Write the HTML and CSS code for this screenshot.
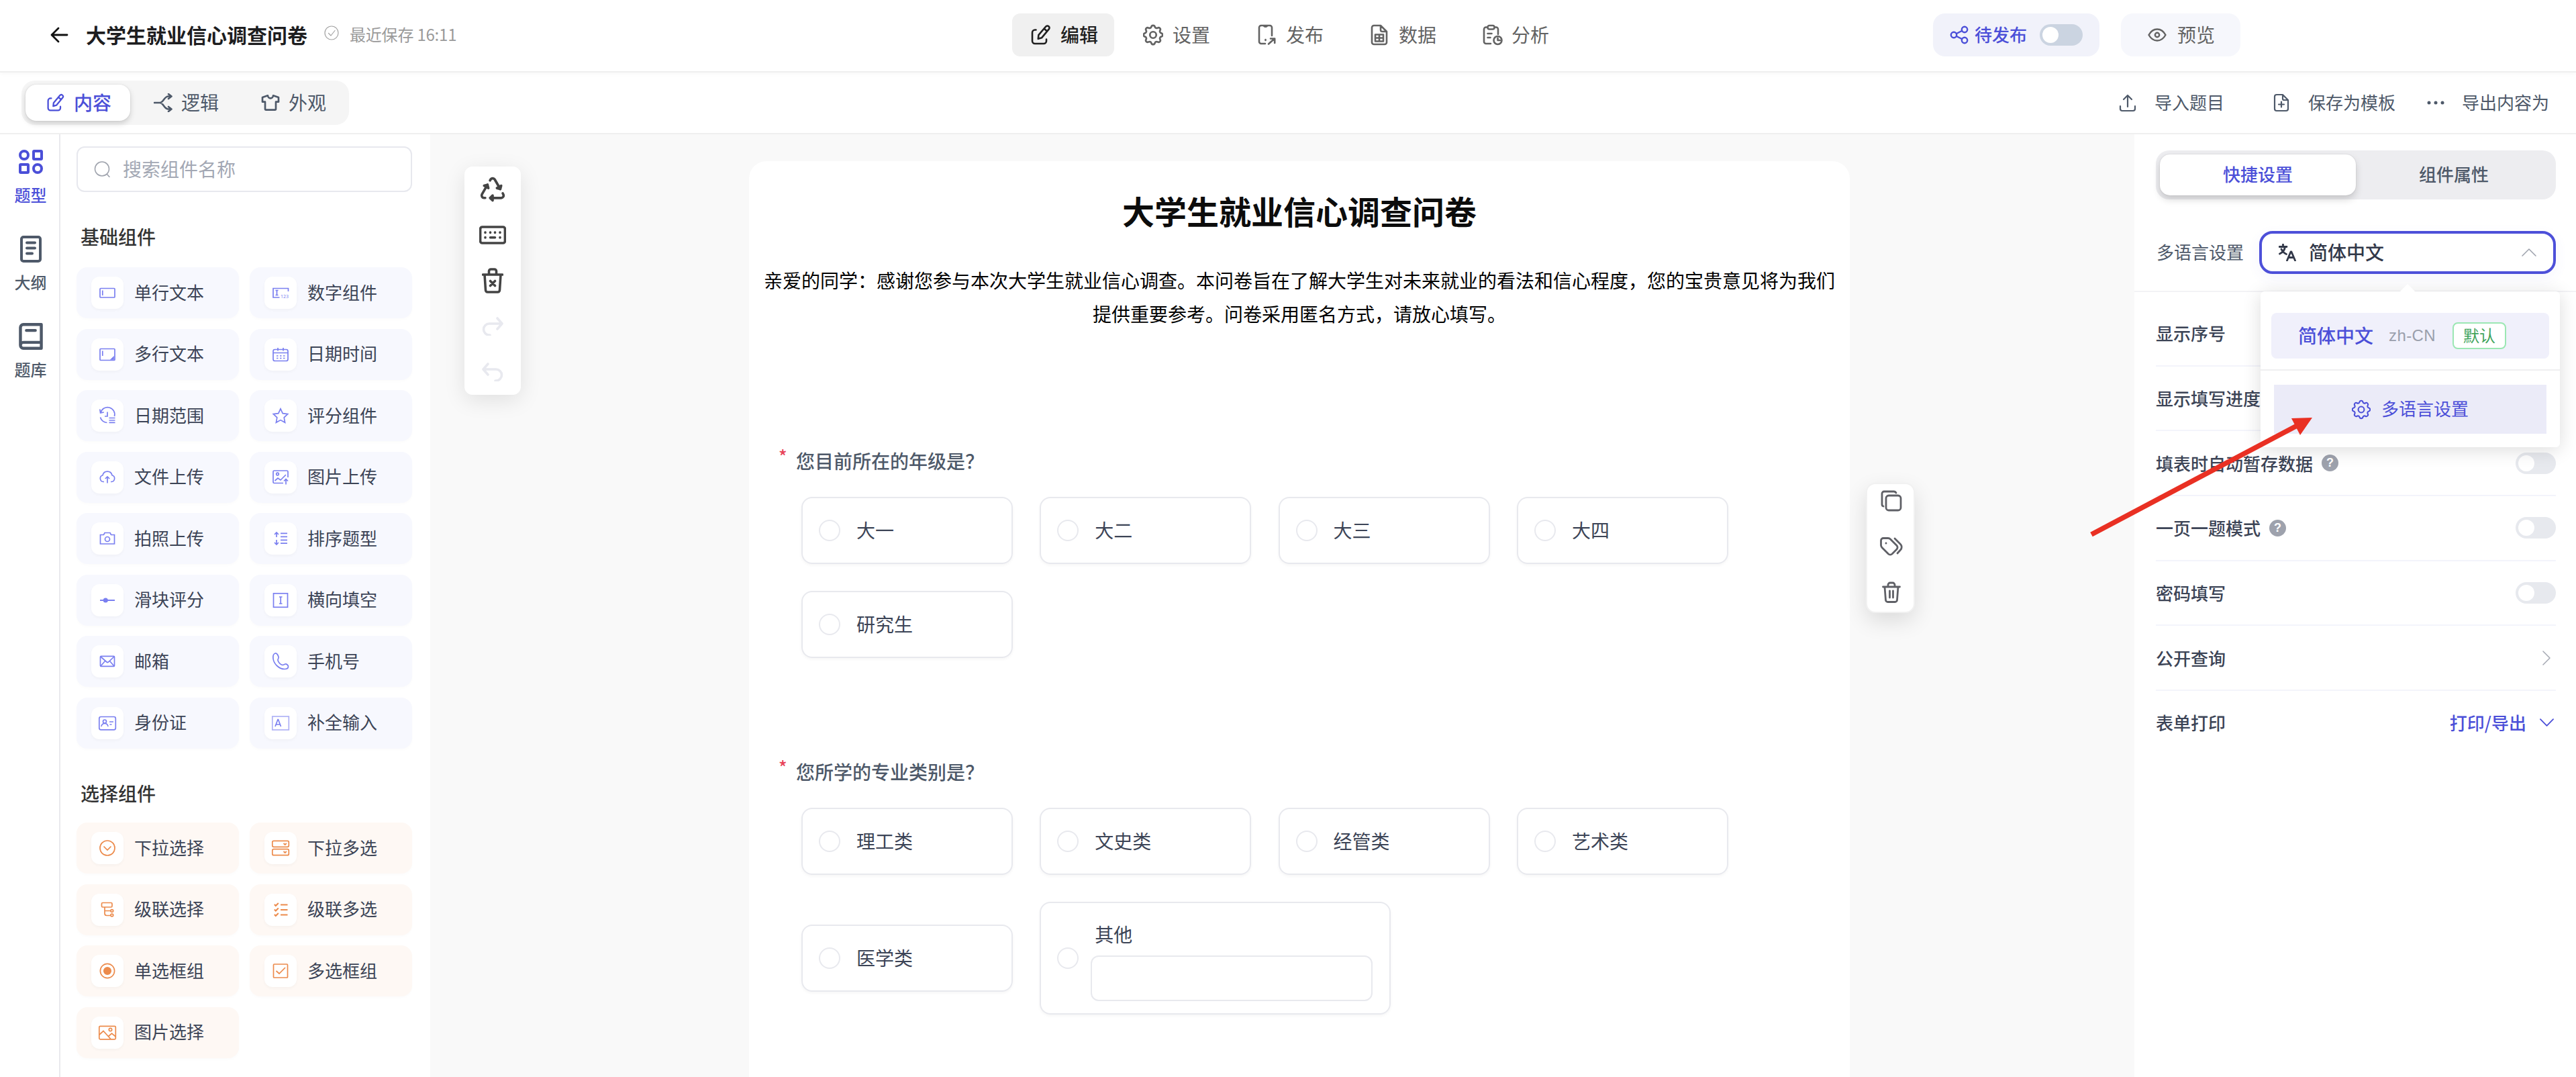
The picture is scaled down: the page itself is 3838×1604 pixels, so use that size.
FILE: index.html
```html
<!DOCTYPE html>
<html lang="zh-CN">
<head>
<meta charset="utf-8">
<title>大学生就业信心调查问卷</title>
<link rel="stylesheet" href="styles.css">
</head>
<body>
<svg class="sprite" aria-hidden="true">
  <symbol id="i-edit" viewBox="0 0 32 32"><path d="M8.500 8.500H7a4 4 0 0 0-4 4V25a4 4 0 0 0 4 4h13a4 4 0 0 0 4-4v-2.500"/><path d="M23.200 3.500a3 3 0 0 1 4.600 3.900L17.200 20.200l-5.400 1.600.6-5.600zM21 7l4 3.500"/></symbol>
  <symbol id="i-gear" viewBox="2.500 2.500 19 19"><path d="M10.325 4.317c.426-1.756 2.924-1.756 3.350 0a1.724 1.724 0 0 0 2.573 1.066c1.543-.94 3.310.826 2.370 2.370a1.724 1.724 0 0 0 1.065 2.572c1.756.426 1.756 2.924 0 3.350a1.724 1.724 0 0 0-1.066 2.573c.94 1.543-.826 3.310-2.370 2.370a1.724 1.724 0 0 0-2.572 1.065c-.426 1.756-2.924 1.756-3.350 0a1.724 1.724 0 0 0-2.573-1.066c-1.543.94-3.310-.826-2.370-2.370a1.724 1.724 0 0 0-1.065-2.572c-1.756-.426-1.756-2.924 0-3.350a1.724 1.724 0 0 0 1.066-2.573c-.94-1.543.826-3.310 2.370-2.370 1 .608 2.296.07 2.572-1.065"/><circle cx="12" cy="12" r="3"/></symbol>
  <symbol id="i-publish" viewBox="0 0 32 32"><path d="M14 29H8a3 3 0 0 1-3-3V5a3 3 0 0 1 3-3h13a3 3 0 0 1 3 3v12M12 2.500q2.500 2.500 5 0M19 29.500l9-8M22 21.500h6.200v6.500"/><path d="M14.500 23v1"/></symbol>
  <symbol id="i-data" viewBox="0 0 32 32"><path d="M18 2H8a3 3 0 0 0-3 3v22a3 3 0 0 0 3 3h16a3 3 0 0 0 3-3V11zM18 2v6.500a2.500 2.500 0 0 0 2.500 2.500H27M10 15.500h12v10H10zM10 20.500h12M16 15.500v10"/></symbol>
  <symbol id="i-analysis" viewBox="0 0 32 32"><path d="M9 4.500H7a3 3 0 0 0-3 3V26a3 3 0 0 0 3 3h7M20 4.500h2a3 3 0 0 1 3 3V15"/><rect x="9.500" y="2" width="10" height="5.500" rx="2.500"/><path d="M9.500 14h6M9.500 20h4"/><circle cx="24.500" cy="24" r="6"/><path d="M24.500 20.500V24h3.500"/></symbol>
  <symbol id="i-back" viewBox="0 0 26 24"><path d="M25 12H2M12 2L2 12l10 10"/></symbol>
  <symbol id="i-ok" viewBox="0 0 22 22"><circle cx="11" cy="11" r="10"/><path d="M6.500 11.500l3.500 3.500 6-7.500"/></symbol>
  <symbol id="i-branch" viewBox="0 0 28 28"><path d="M1 14h8M26.500 4.500H22C15 4.500 15 14 9 14c6 0 6 9.500 13 9.500h4.500M22 1l4.500 3.500L22 8M22 20l4.500 3.500L22 27"/></symbol>
  <symbol id="i-shirt" viewBox="0 0 24 24"><path d="M15 4l6 2v5h-3v8a1 1 0 0 1-1 1H7a1 1 0 0 1-1-1v-8H3V6l6-2a3 3 0 0 0 6 0"/></symbol>
  <symbol id="i-share" viewBox="0 0 28 28"><circle cx="6" cy="14" r="4.200"/><circle cx="22" cy="6" r="4.200"/><circle cx="22" cy="22" r="4.200"/><path d="M10 12l8-4M10 16l8 4"/></symbol>
  <symbol id="i-eye" viewBox="0 0 28 20"><path d="M1.500 10C4.500 4.500 9 1.500 14 1.500S23.500 4.500 26.500 10c-3 5.500-7.500 8.500-12.500 8.500S4.500 15.500 1.500 10z"/><circle cx="14" cy="10" r="3.200"/></symbol>
  <symbol id="i-upload" viewBox="0 0 26 26"><path d="M13 19V2M7 8l6-6 6 6M2 18v4a3 3 0 0 0 3 3h16a3 3 0 0 0 3-3v-4"/></symbol>
  <symbol id="i-filep" viewBox="0 0 26 28"><path d="M15 2H6a3 3 0 0 0-3 3v18a3 3 0 0 0 3 3h14a3 3 0 0 0 3-3V10zM15 2v6a2 2 0 0 0 2 2h6M13 12.500v8M9 16.500h8"/></symbol>
  <symbol id="i-dots" viewBox="0 0 28 8"><g fill="currentColor" stroke="none"><circle cx="4" cy="4" r="2.500"/><circle cx="14" cy="4" r="2.500"/><circle cx="24" cy="4" r="2.500"/></g></symbol>
  <symbol id="i-types" viewBox="0 0 36 36"><circle cx="8" cy="8" r="6"/><rect x="22" y="2" width="12" height="12" rx="1"/><rect x="2" y="22" width="12" height="12" rx="1"/><circle cx="28" cy="28" r="6"/></symbol>
  <symbol id="i-outline" viewBox="0 0 32 40"><rect x="2" y="2" width="28" height="36" rx="3"/><path d="M10 10.500h12M10 18.500h12M10 26.500h8"/></symbol>
  <symbol id="i-bank" viewBox="0 0 32 36"><path d="M30 2H6a4 4 0 0 0-4 4v24a4 4 0 0 0 4 4h24zM2 30a4 4 0 0 1 4-4h24M10 10h12"/></symbol>
  <symbol id="i-search" viewBox="0 0 24 24"><circle cx="12" cy="11.500" r="10.500"/><path d="M19.500 19.500l3.500 4"/></symbol>
  <symbol id="i-recycle" viewBox="0 0 24 24"><path d="M10 19h9a2 2 0 0 0 1.750-2.750l-.55-1M7.804 8.268l-4.500 7.794a2 2 0 0 0 1.506 2.890l1.141.024M18.196 11.732l-4.500-7.794a2 2 0 0 0-3.256-.14l-.591.976"/><path fill="currentColor" d="M12 17l-2 2 2 2zM8.536 11l-.732-2.732-2.732.732zM15.464 11l2.732.732.732-2.732z"/></symbol>
  <symbol id="i-keys" viewBox="0 0 40 28"><rect x="1.600" y="2" width="36.800" height="24" rx="3"/><path d="M9 10v.5M16.500 10v.5M23.500 10v.5M31 10v.5M9 17.500v.5M31 17.500v.5M16.500 17.700h7"/></symbol>
  <symbol id="i-clear" viewBox="0 0 32 38"><path d="M1.500 10h29M4 10l1.500 23a3 3 0 0 0 3 3h15a3 3 0 0 0 3-3L28 10M10.500 9.500V5a3 3 0 0 1 3-3h5a3 3 0 0 1 3 3v4.500M12.500 19.500l7 7M19.500 19.500l-7 7"/></symbol>
  <symbol id="i-redo" viewBox="0 0 32 28"><path d="M23 2l7 8-7 8M29 10H11a8.500 8.500 0 0 0 0 17h1"/></symbol>
  <symbol id="i-undo" viewBox="0 0 32 28"><path d="M9 2l-7 8 7 8M3 10h18a8.500 8.500 0 0 1 0 17h-1"/></symbol>
  <symbol id="i-copy" viewBox="0 0 32 32"><rect x="8" y="8" width="22" height="22" rx="4"/><path d="M4 24a3 3 0 0 1-2-3V5a3 3 0 0 1 3-3h15a4 4 0 0 1 3 2"/></symbol>
  <symbol id="i-tags" viewBox="0 0 34 28"><path d="M1.500 5v7a5 5 0 0 0 1.500 3.500l9.500 9.500a4 4 0 0 0 5.500 0l7-7a4 4 0 0 0 0-5.500L15.500 3A5 5 0 0 0 12 1.500H5A3.500 3.500 0 0 0 1.500 5zM22 2l8.500 8.500a6 6 0 0 1 0 8.500L26 24M9 9v.2"/></symbol>
  <symbol id="i-trash" viewBox="0 0 28 32"><path d="M1.500 8h25M4 8l1.500 19.500a3 3 0 0 0 3 3h11a3 3 0 0 0 3-3L24 8M9 7.500V5a3 3 0 0 1 3-3h4a3 3 0 0 1 3 3v2.500M11.500 14v10M16.500 14v10"/></symbol>
  <symbol id="i-lang" viewBox="0 0 26 26"><path d="M1 4.500h11M6.500 1v3.500M9.500 4.500C9 9 6 13 1.500 15M4 8c1.500 3.500 4 6 7.500 7.500M12.500 25L18 12h1l5.500 13M14.500 20.500h8"/></symbol>
  <symbol id="i-up" viewBox="0 0 22 12"><path d="M1 11L11 1l10 10"/></symbol>
  <symbol id="i-down" viewBox="0 0 22 12"><path d="M1 1l10 10L21 1"/></symbol>
  <symbol id="i-right" viewBox="0 0 12 22"><path d="M1 1l10 10L1 21"/></symbol>

  <symbol id="c-single" viewBox="0 0 48 48"><rect x="13" y="17.500" width="22" height="13.500" rx="1"/><path d="M16.800 20.500v7.500"/></symbol>
  <symbol id="c-number" viewBox="0 0 48 48"><path d="M22.500 31H13V17.500h22.500V22M16.500 20.500h4M18.500 20.500v7M16.500 27.500h4"/><text x="24" y="31.500">123</text></symbol>
  <symbol id="c-multi" viewBox="0 0 48 48"><rect x="13" y="15.500" width="22" height="17" rx="1"/><path d="M16.800 18.500v7.500"/><path fill="currentColor" d="M33 28v3h-3z"/></symbol>
  <symbol id="c-cal" viewBox="0 0 48 48"><rect x="13" y="16.500" width="22" height="17" rx="2.500"/><path d="M13 21.500h22M20 14v4.500M28 14v4.500M18 26h2.500M23 26h2.500M28 26h2.500M18 29.500h2.500M23 29.500h2.500M28 29.500h2.500"/></symbol>
  <symbol id="c-range" viewBox="0 0 48 48"><path d="M14 19.500A10.500 10.500 0 0 1 34.500 25M13.500 26.500A10.500 10.500 0 0 0 23.500 34.500M12.800 14.500l.8 5.500 5.200-1M24 18.500V25h-4M26.500 27.500h9M26.500 31h9M26.500 34.300h9"/></symbol>
  <symbol id="c-star" viewBox="0 0 48 48"><path d="M24 13.800l3.200 6.900 7.500.9-5.500 5.200 1.400 7.500-6.600-3.700-6.600 3.700 1.400-7.500-5.500-5.200 7.500-.9z"/></symbol>
  <symbol id="c-cloud" viewBox="0 0 48 48"><path d="M19 30.500h-1a5 5 0 0 1-1-9.800 7.200 7.200 0 0 1 14 0 5 5 0 0 1-1 9.800h-1M24 32.500v-9.500M20.800 26l3.200-3 3.200 3"/></symbol>
  <symbol id="c-imgup" viewBox="0 0 48 48"><path d="M28 32.500H14.500a1.500 1.500 0 0 1-1.500-1.500V15.500a1.500 1.500 0 0 1 1.500-1.500h19a1.500 1.500 0 0 1 1.500 1.500V24M15.500 29l4.500-4 4 3 8-8M32 34.500V27M29 29.500l3-3 3 3"/><circle cx="19.500" cy="19" r="1.800"/></symbol>
  <symbol id="c-cam" viewBox="0 0 48 48"><path d="M13.500 18.500h5l1.500-3h8l1.500 3h5V32h-21z"/><circle cx="24" cy="25" r="3.500"/></symbol>
  <symbol id="c-sort" viewBox="0 0 48 48"><path d="M18 15v7M15 18l3-3 3 3M18 26v7M15 30l3 3 3-3M24 16.300h10M24 21.300h10M24 26.300h10M24 31.200h10"/></symbol>
  <symbol id="c-slider" viewBox="0 0 48 48"><path stroke-width="2.200" d="M13 24h22"/><circle cx="21.300" cy="24" r="2.700" fill="currentColor"/></symbol>
  <symbol id="c-blank" viewBox="0 0 48 48"><rect x="13.500" y="13.800" width="21" height="20.500"/><path d="M22 19h4.500M24.200 19v10M22 29h4.500"/></symbol>
  <symbol id="c-mail" viewBox="0 0 48 48"><rect x="13.500" y="16.300" width="21" height="15" rx="1"/><path d="M14 17l9 8q1.200 1 2.400 0l8.600-8M14 31l6.500-7.500M34 31l-6.500-7.500"/></symbol>
  <symbol id="c-phone" viewBox="0 0 48 48"><path d="M16 12c-3 1-3.600 3.500-3 8C14 28 22 35.500 30 35.500c4 0 5.500-2 5.500-4 0-1.500-2.500-4-4.500-3.500s-3 2-5.500 1-5.500-4.500-5.500-7 1.500-2 1-4.500-2.500-6-5-5.500z"/></symbol>
  <symbol id="c-id" viewBox="0 0 48 48"><rect x="11.800" y="14.500" width="24.500" height="19.300" rx="2.500"/><circle cx="20" cy="21.500" r="2.500"/><path d="M15 29c.5-3.500 2.500-4.500 5-4.500s4.500 1 5 4.500M27 22h6M27.500 26h3"/></symbol>
  <symbol id="c-auto" viewBox="0 0 48 48"><rect x="11.800" y="14" width="24.500" height="20" opacity=".6"/><path d="M16 29l4-10.500h.5l4 10.500M17.200 26h6"/></symbol>
  <symbol id="c-sel" viewBox="0 0 48 48"><circle cx="24" cy="24" r="11"/><path d="M18.500 21.500l5.500 5.500 5.500-5.500"/></symbol>
  <symbol id="c-msel" viewBox="0 0 48 48"><rect x="11.800" y="13.300" width="24.500" height="9" rx="2"/><rect x="11.800" y="25.700" width="24.500" height="9" rx="2"/><path d="M28.500 17l2.200 2 2.200-2M28.500 29l2.200 2 2.200-2"/></symbol>
  <symbol id="c-tree" viewBox="0 0 48 48"><rect x="15.500" y="13.500" width="15.500" height="6.500" rx="1.500"/><path d="M20 20v9.500a3 3 0 0 0 3 3h5.500M20 25.500h8.500"/><circle cx="30.800" cy="25.500" r="1.900"/><circle cx="30.800" cy="32" r="1.900"/></symbol>
  <symbol id="c-list" viewBox="0 0 48 48"><path stroke-width="2" d="M24 16.500h10.500M24 24h10.500M24 31.500h10.500M14.800 16l2 2 4-4M14.800 23.500l2 2 4-4M14.800 31l2 2 4-4"/></symbol>
  <symbol id="c-radio" viewBox="0 0 48 48"><circle cx="24" cy="24" r="10.600"/><circle cx="24" cy="24" r="5.200" fill="currentColor"/></symbol>
  <symbol id="c-check" viewBox="0 0 48 48"><rect x="13.500" y="14" width="21" height="20" rx="1"/><path d="M17.500 24l4.500 4 9-9"/></symbol>
  <symbol id="c-img" viewBox="0 0 48 48"><rect x="11.800" y="14.300" width="24.500" height="19.500" rx="1.500"/><path d="M12 27l6-5.500 11 12M25.500 29.500l5-4.500 6 5"/><circle cx="28.500" cy="19.500" r="2.200"/></symbol>
</svg>

<header class="topbar">
  <div class="doc">
    <svg class="ic back"><use href="#i-back"/></svg>
    <h1 class="doc-title t">大学生就业信心调查问卷</h1>
    <svg class="ic ok"><use href="#i-ok"/></svg>
    <span class="saved t">最近保存 16:11</span>
  </div>
  <nav class="stages">
    <a class="stage on"><svg class="ic"><use href="#i-edit"/></svg><span class="t">编辑</span></a>
    <a class="stage"><svg class="ic gear"><use href="#i-gear"/></svg><span class="t">设置</span></a>
    <a class="stage"><svg class="ic"><use href="#i-publish"/></svg><span class="t">发布</span></a>
    <a class="stage"><svg class="ic"><use href="#i-data"/></svg><span class="t">数据</span></a>
    <a class="stage"><svg class="ic"><use href="#i-analysis"/></svg><span class="t">分析</span></a>
  </nav>
  <div class="actions">
    <div class="pending"><svg class="ic"><use href="#i-share"/></svg><span class="t">待发布</span><i class="switch dark"></i></div>
    <div class="preview"><svg class="ic"><use href="#i-eye"/></svg><span class="t">预览</span></div>
  </div>
</header>

<div class="subbar">
  <div class="modes">
    <a class="mode on"><svg class="ic"><use href="#i-edit"/></svg><span class="t">内容</span></a>
    <a class="mode"><svg class="ic"><use href="#i-branch"/></svg><span class="t">逻辑</span></a>
    <a class="mode"><svg class="ic shirt"><use href="#i-shirt"/></svg><span class="t">外观</span></a>
  </div>
  <div class="tools">
    <a class="tool"><svg class="ic"><use href="#i-upload"/></svg><span class="t">导入题目</span></a>
    <a class="tool save"><svg class="ic"><use href="#i-filep"/></svg><span class="t">保存为模板</span></a>
    <a class="tool more"><svg class="ic"><use href="#i-dots"/></svg><span class="t">导出内容为</span></a>
  </div>
</div>

<main class="body">
  <nav class="rail">
    <a class="rail-item on"><svg class="ic"><use href="#i-types"/></svg><span>题型</span></a>
    <a class="rail-item"><svg class="ic"><use href="#i-outline"/></svg><span>大纲</span></a>
    <a class="rail-item"><svg class="ic"><use href="#i-bank"/></svg><span>题库</span></a>
  </nav>

  <aside class="panel">
    <div class="search"><svg class="ic"><use href="#i-search"/></svg><span class="t">搜索组件名称</span></div>
    <h2 class="group">基础组件</h2>
    <div class="cards">
      <div class="card"><svg><use href="#c-single"/></svg><span class="t">单行文本</span></div>
      <div class="card"><svg><use href="#c-number"/></svg><span class="t">数字组件</span></div>
      <div class="card"><svg><use href="#c-multi"/></svg><span class="t">多行文本</span></div>
      <div class="card"><svg><use href="#c-cal"/></svg><span class="t">日期时间</span></div>
      <div class="card"><svg><use href="#c-range"/></svg><span class="t">日期范围</span></div>
      <div class="card"><svg><use href="#c-star"/></svg><span class="t">评分组件</span></div>
      <div class="card"><svg><use href="#c-cloud"/></svg><span class="t">文件上传</span></div>
      <div class="card"><svg><use href="#c-imgup"/></svg><span class="t">图片上传</span></div>
      <div class="card"><svg><use href="#c-cam"/></svg><span class="t">拍照上传</span></div>
      <div class="card"><svg><use href="#c-sort"/></svg><span class="t">排序题型</span></div>
      <div class="card"><svg><use href="#c-slider"/></svg><span class="t">滑块评分</span></div>
      <div class="card"><svg><use href="#c-blank"/></svg><span class="t">横向填空</span></div>
      <div class="card"><svg><use href="#c-mail"/></svg><span class="t">邮箱</span></div>
      <div class="card"><svg><use href="#c-phone"/></svg><span class="t">手机号</span></div>
      <div class="card"><svg><use href="#c-id"/></svg><span class="t">身份证</span></div>
      <div class="card"><svg><use href="#c-auto"/></svg><span class="t">补全输入</span></div>
    </div>
    <h2 class="group second">选择组件</h2>
    <div class="cards warm">
      <div class="card"><svg><use href="#c-sel"/></svg><span class="t">下拉选择</span></div>
      <div class="card"><svg><use href="#c-msel"/></svg><span class="t">下拉多选</span></div>
      <div class="card"><svg><use href="#c-tree"/></svg><span class="t">级联选择</span></div>
      <div class="card"><svg><use href="#c-list"/></svg><span class="t">级联多选</span></div>
      <div class="card"><svg><use href="#c-radio"/></svg><span class="t">单选框组</span></div>
      <div class="card"><svg><use href="#c-check"/></svg><span class="t">多选框组</span></div>
      <div class="card"><svg><use href="#c-img"/></svg><span class="t">图片选择</span></div>
    </div>
  </aside>

  <section class="canvas">
    <div class="side-tools">
      <span><svg class="ic" width="44" height="44"><use href="#i-recycle"/></svg></span>
      <span><svg class="ic" width="40" height="28"><use href="#i-keys"/></svg></span>
      <span><svg class="ic" width="32" height="38"><use href="#i-clear"/></svg></span>
      <span class="off"><svg class="ic" width="32" height="28"><use href="#i-redo"/></svg></span>
      <span class="off"><svg class="ic" width="32" height="28"><use href="#i-undo"/></svg></span>
    </div>
    <article class="paper">
      <h2 class="paper-title">大学生就业信心调查问卷</h2>
      <p class="intro">亲爱的同学：感谢您参与本次大学生就业信心调查。本问卷旨在了解大学生对未来就业的看法和信心程度，您的宝贵意见将为我们<br>提供重要参考。问卷采用匿名方式，请放心填写。</p>
      <section class="question">
        <h3 class="q-title"><b>*</b>您目前所在的年级是？</h3>
        <div class="options">
          <label class="option"><i></i><span class="t">大一</span></label>
          <label class="option"><i></i><span class="t">大二</span></label>
          <label class="option"><i></i><span class="t">大三</span></label>
          <label class="option"><i></i><span class="t">大四</span></label>
          <label class="option"><i></i><span class="t">研究生</span></label>
        </div>
      </section>
      <section class="question">
        <h3 class="q-title"><b>*</b>您所学的专业类别是？</h3>
        <div class="options">
          <label class="option"><i></i><span class="t">理工类</span></label>
          <label class="option"><i></i><span class="t">文史类</span></label>
          <label class="option"><i></i><span class="t">经管类</span></label>
          <label class="option"><i></i><span class="t">艺术类</span></label>
          <label class="option"><i></i><span class="t">医学类</span></label>
          <label class="option other"><i></i><span class="other-body"><span>其他</span><span class="other-input"></span></span></label>
        </div>
      </section>
    </article>
    <div class="item-tools">
      <svg class="ic" width="32" height="32"><use href="#i-copy"/></svg>
      <svg class="ic" width="34" height="28"><use href="#i-tags"/></svg>
      <svg class="ic" width="28" height="32"><use href="#i-trash"/></svg>
    </div>
  </section>

  <aside class="props">
    <div class="tabs"><a class="tab on"><span class="t">快捷设置</span></a><a class="tab"><span class="t">组件属性</span></a></div>
    <div class="lang-row">
      <span class="lang-label t">多语言设置</span>
      <div class="select">
        <svg class="ic lang"><use href="#i-lang"/></svg><span class="t">简体中文</span><svg class="ic caret"><use href="#i-up"/></svg>
        <div class="menu">
          <div class="menu-top"><div class="choice"><span class="t">简体中文</span><small>zh-CN</small><em>默认</em></div></div>
          <div class="menu-btn"><svg class="ic"><use href="#i-gear"/></svg><span class="t">多语言设置</span></div>
        </div>
      </div>
    </div>
    <div class="rows">
      <div class="row"><span>显示序号</span></div>
      <div class="row"><span>显示填写进度</span></div>
      <div class="row"><span>填表时自动暂存数据</span><q>?</q><i class="switch"></i></div>
      <div class="row"><span>一页一题模式</span><q>?</q><i class="switch"></i></div>
      <div class="row"><span>密码填写</span><i class="switch"></i></div>
      <div class="row"><span>公开查询</span><svg class="ic go"><use href="#i-right"/></svg></div>
      <div class="row last"><span>表单打印</span><a class="print">打印/导出<svg class="ic dn"><use href="#i-down"/></svg></a></div>
    </div>
  </aside>
</main>
<svg class="pointer" viewBox="0 0 340 190" width="340" height="190"><path d="M6 182L316 18" stroke="#e93023" stroke-width="7.500" fill="none"/><path d="M304 9l31-1-18 26z" fill="#e93023"/></svg>
</body>
</html>
```
FILE: styles.css
```css
* { box-sizing: border-box; }
body {
  margin: 0;
  width: 3838px;
  height: 1604px;
  overflow: hidden;
  position: relative;
  display: flex;
  flex-direction: column;
  background: #fff;
  color: #3c4456;
  font-family: "Noto Sans CJK SC", "Noto Sans", sans-serif;
  font-size: 28px;
  line-height: 40px;
}
h1, h2, h3, p { margin: 0; font-weight: 500; }
i, em { font-style: normal; }
.sprite { display: none; }
.ic {
  flex: none;
  fill: none;
  stroke: currentColor;
  stroke-width: 2.4;
  stroke-linecap: round;
  stroke-linejoin: round;
}
/* optical centring of CJK glyphs in flex rows */
.t { margin-bottom: 3px; white-space: nowrap; }

/* top bar */
.topbar {
  flex: none;
  display: flex;
  align-items: center;
  height: 108px;
  padding: 0 500px 2px 74px;
  border-bottom: 2px solid #efefef;
  box-shadow: 0 2px 6px rgba(0, 0, 0, .03);
}
.doc { display: flex; align-items: center; width: 1434px; }
.back { width: 28px; height: 24px; color: #111; stroke-width: 2.8; margin-right: 26px; }
.doc-title { font-size: 30px; font-weight: 700; color: #1d1d1f; }
.ok { width: 22px; height: 22px; margin: -7px 16px 0 25px; color: #a3a3a3; stroke-width: 1.2; }
.saved { font-size: 24px; color: #9a9a9a; letter-spacing: -.2px; }
.stages { display: flex; gap: 16px; width: 1372px; }
.stage {
  display: flex;
  align-items: center;
  gap: 13px;
  width: 152px;
  height: 64px;
  padding-left: 27px;
  border-radius: 12px;
  color: #636363;
}
.stage .ic { width: 32px; height: 32px; stroke-width: 2.6; }
.stage .gear { width: 30px; height: 32px; margin-right: 1px; stroke-width: 1.700; }
.stage.on { background: #f0f0f0; color: #1f1f1f; font-weight: 500; }
.actions { display: flex; gap: 32px; }
.pending, .preview { display: flex; align-items: center; height: 64px; border-radius: 18px; }
.pending { width: 248px; padding-left: 25px; background: #f1f2fa; color: #4b4fd8; font-size: 26px; font-weight: 500; }
.pending .ic { width: 28px; height: 28px; margin-right: 9px; }
.pending .switch { margin-left: 19px; }
.preview { width: 178px; padding-left: 40px; gap: 16px; background: #f6f7fc; color: #636363; }
.preview .ic { width: 28px; height: 20px; }
.switch {
  flex: none;
  width: 60px;
  height: 32px;
  padding: 4px;
  border-radius: 16px;
  background: #e7e9ee;
}
.switch::before { content: ""; display: block; width: 24px; height: 24px; border-radius: 50%; background: #fff; }
.switch.dark { width: 64px; background: #cbd4e1; }

/* second bar */
.subbar {
  flex: none;
  display: flex;
  align-items: center;
  justify-content: space-between;
  height: 92px;
  padding: 0 40px 0 32px;
  border-bottom: 2px solid #efefef;
  color: #4e5969;
}
.modes {
  display: flex;
  align-items: center;
  width: 488px;
  height: 66px;
  padding: 0 6px;
  gap: 4px;
  border-radius: 20px;
  background: #f5f5f5;
}
.mode {
  display: flex;
  align-items: center;
  gap: 13px;
  width: 156px;
  height: 54px;
  padding-left: 31px;
  border-radius: 16px;
}
.mode .ic { width: 28px; height: 28px; stroke-width: 2.6; }
.mode .shirt { stroke-width: 2; width: 32px; height: 32px; margin: 0 -2px; }
.mode.on { background: #fff; color: #4b4fd8; font-weight: 500; box-shadow: 0 4px 8px rgba(0, 0, 0, .16), 0 0 2px rgba(0, 0, 0, .12); }
.tools { display: flex; font-size: 26px; }
.tool { display: flex; align-items: center; gap: 27px; }
.tool .ic { width: 26px; height: 28px; stroke-width: 2.2; }
.tool.save { margin-left: 72px; }
.tool.more { margin-left: 46px; gap: 25px; }
.tool.more .ic { width: 28px; height: 8px; }

/* body columns */
.body { flex: 1; display: flex; min-height: 0; }
.rail {
  flex: none;
  width: 90px;
  display: flex;
  flex-direction: column;
  align-items: center;
  gap: 22px;
  padding-top: 17px;
  border-right: 2px solid #e9e9ed;
}
.rail-item {
  display: flex;
  flex-direction: column;
  align-items: center;
  height: 108px;
  padding-left: 3px;
  color: #4e5969;
  font-size: 24px;
  font-weight: 500;
  line-height: 30px;
}
.rail-item .ic { width: 36px; height: 40px; margin: 4px 0 14px; stroke-width: 4; }
.rail-item.on { color: #4b4fd8; }

.panel { flex: none; width: 551px; padding: 18px 27px 0 24px; }
.search {
  display: flex;
  align-items: center;
  gap: 19px;
  height: 68px;
  padding-left: 24px;
  border: 2px solid #e7e8ee;
  border-radius: 12px;
  color: #a3a8b4;
}
.search .ic { width: 24px; height: 24px; stroke-width: 1.6; color: #9fa3ad; }
.group { padding-left: 6px; margin: 46px 0 26px; font-size: 28px; color: #333; height: 40px; }
.group.second { margin: 46px 0 24px; height: 40.500px; }
.cards { display: grid; grid-template-columns: 242px 242px; grid-auto-rows: 76px; gap: 15.500px 16px; }
.card {
  display: flex;
  align-items: center;
  gap: 16px;
  padding-left: 22px;
  border-radius: 16px;
  background: #f7f8fe;
  box-shadow: 0 2px 4px rgba(0, 0, 0, .015);
  font-size: 26px;
  color: #3c4456;
}
.card svg {
  flex: none;
  width: 48px;
  height: 48px;
  border-radius: 12px;
  background: #fff;
  box-shadow: 0 2px 4px rgba(0, 0, 0, .03);
  color: #7a7ff0;
  fill: none;
  stroke: currentColor;
  stroke-width: 1.7;
}
symbol text { font: 7px "Noto Sans", sans-serif; fill: currentColor; stroke: none; }
.warm .card { background: #fef8f4; }
.warm .card svg { color: #ec8b4c; }

.canvas { flex: none; width: 2539px; display: flex; align-items: flex-start; padding-left: 51px; background: #f9f9f9; }
.side-tools {
  width: 84px;
  height: 340px;
  margin: 48px 340px 0 0;
  border-radius: 12px;
  background: #fff;
  box-shadow: 0 8px 32px rgba(0, 0, 0, .1);
  color: #444;
}
.side-tools span { display: flex; align-items: center; justify-content: center; height: 68px; }
.side-tools .ic { stroke-width: 3.6; }
.side-tools span:first-child .ic { stroke-width: 2; }
.side-tools .off { color: #e8e9ef; }
.paper {
  width: 1640px;
  height: 1364px;
  margin-top: 40px;
  padding-top: 43px;
  border-radius: 26px 26px 0 0;
  background: #fff;
}
.paper-title { font-size: 48px; line-height: 60px; font-weight: 700; text-align: center; color: #0c0c0c; }
.intro { margin-top: 49px; height: 100px; line-height: 50px; font-weight: 400; text-align: center; color: #000; white-space: nowrap; }
.question { padding-left: 44px; margin-top: 174px; }
.question + .question { margin-top: 149px; }
.q-title { display: flex; height: 40px; margin-bottom: 34px; font-size: 28px; color: #4e5969; }
.q-title b { width: 26px; font-size: 26px; font-weight: 500; line-height: 26px; color: #e8445a; }
.options { display: flex; flex-wrap: wrap; align-items: center; gap: 40px 40.300px; padding-left: 34px; width: 1500px; }
.option {
  display: flex;
  align-items: center;
  gap: 24px;
  width: 315px;
  height: 100px;
  padding-left: 24px;
  border: 2px solid #e8e9ee;
  border-radius: 16px;
  box-shadow: 0 2px 4px rgba(0, 0, 0, .04);
}
.option i { flex: none; width: 32px; height: 32px; border: 2px solid #e8e9ee; border-radius: 50%; }
.option.other { width: 523px; height: 168px; gap: 18px; }
.other-body { display: flex; flex-direction: column; gap: 12px; margin-top: 8px; }
.other-body > span:first-child { padding-left: 6px; }
.other-input { width: 420px; height: 68px; border: 2px solid #e8e9ee; border-radius: 12px; }
.item-tools {
  display: flex;
  flex-direction: column;
  align-items: center;
  justify-content: space-between;
  width: 73px;
  height: 194px;
  margin: 519px 0 0 23.500px;
  padding: 9px 0 13px 4px;
  border: 2px solid #f1f1f1;
  border-radius: 14px;
  background: #fff;
  box-shadow: 0 12px 32px rgba(0, 0, 0, .12);
  color: #5f6066;
}
.item-tools .ic { stroke-width: 2.8; }

/* settings */
.props { flex: none; width: 658px; }
.tabs { display: flex; margin: 24px 30px 0 32px; height: 73px; padding: 6px; border-radius: 20px; background: #ededf0; font-size: 26px; }
.tab { flex: 1; display: flex; align-items: center; justify-content: center; border-radius: 15px; color: #4e5969; font-weight: 500; }
.tab.on { background: #fff; color: #4b4fd8; box-shadow: 0 6px 12px rgba(0, 0, 0, .16), 0 0 2px rgba(0, 0, 0, .14); }
.lang-row { display: flex; align-items: center; height: 138px; padding: 22px 30px 0 33px; border-bottom: 2px solid #f2f2f5; font-size: 26px; }
.lang-label { width: 153px; color: #4e5969; }
.select {
  position: relative;
  display: flex;
  align-items: center;
  width: 442px;
  height: 64px;
  border: 4px solid #4d50d9;
  border-radius: 20px;
  padding: 0 25px;
  font-size: 28px;
  font-weight: 500;
  color: #323849;
  box-shadow: 0 6px 20px rgba(77, 80, 217, .06);
}
.select > .lang { width: 26px; height: 26px; margin-right: 19px; stroke-width: 2.8; }
.select > .caret { width: 22px; height: 12px; margin-left: auto; stroke-width: 1.5; color: #9da1ac; }
.menu {
  position: absolute;
  left: -2px;
  top: 86px;
  width: 446px;
  height: 232px;
  border-radius: 6px;
  background: #fff;
  box-shadow: 0 4px 28px rgba(0, 0, 0, .14);
  font-weight: 400;
  z-index: 2;
}
.menu::before {
  content: "";
  position: absolute;
  left: 208px;
  top: -11px;
  border: 11px solid transparent;
  border-top: 0;
  border-bottom-color: #fff;
}
.menu-top { height: 118px; padding: 32px 16px 0; border-bottom: 2px solid #efeff1; }
.choice { display: flex; align-items: center; height: 68px; padding-left: 40px; border-radius: 8px; background: #f0f0fb; color: #4b4fd8; }
.choice span { font-weight: 500; }
.choice small { margin-left: 23px; width: 95px; font: 24px/30px "Liberation Sans", sans-serif; letter-spacing: .4px; color: #9a9fac; }
.choice em { width: 80px; height: 40px; border: 2px solid #9be7b3; border-radius: 8px; background: #fff; color: #3fa45c; font-size: 24px; line-height: 34px; text-align: center; }
.menu-btn { display: flex; align-items: center; justify-content: center; gap: 16px; margin: 21px 20px 0; height: 73px; background: #ebebf8; color: #4b4fd8; font-size: 26px; }
.menu-btn .ic { width: 28px; height: 30px; stroke-width: 1.4; }
.rows { padding: 14px 30px 0 32px; }
.row { display: flex; align-items: center; height: 96.700px; border-bottom: 2px solid #f3f4fb; font-size: 26px; font-weight: 500; }
.row.last { border-bottom-color: transparent; }
.row > :last-child:not(:first-child) { margin-left: auto; }
.row q {
  quotes: none;
  width: 25px;
  height: 25px;
  margin-left: 13px;
  border-radius: 50%;
  background: #9ea2ad;
  color: #fff;
  font: 700 18px/25px "Liberation Sans", sans-serif;
  text-align: center;
}
.row .go { width: 12px; height: 22px; margin-right: 8px; stroke-width: 1.5; color: #a5a9b3; }
.row .print { display: flex; align-items: center; gap: 20px; padding-right: 3px; color: #4b4fd8; }
.row .dn { width: 21px; height: 12px; stroke-width: 1.9; }

.pointer { position: absolute; left: 3110px; top: 614px; z-index: 3; }
```
